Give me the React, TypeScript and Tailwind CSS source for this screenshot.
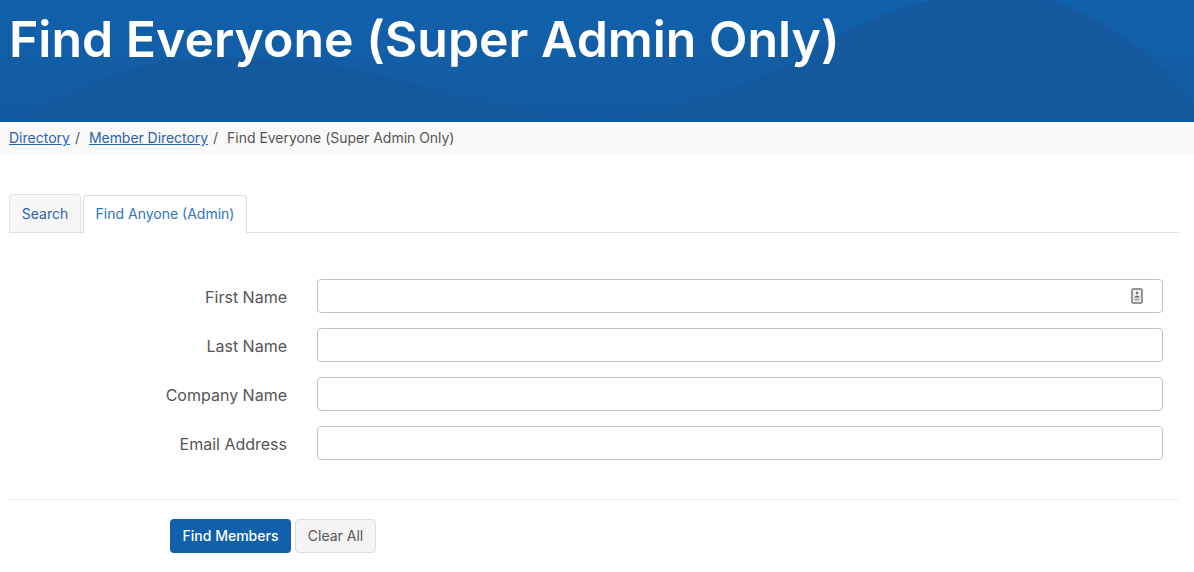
import React from "react";

function Row({ label, icon }: { label: string; icon?: boolean }) {
  return (
    <div className="flex items-center h-[34px] mb-[15px]">
      <label className="w-[287px] pt-[1px] text-right text-[16px] leading-[24px] text-[#555]">{label}</label>
      <div className="relative ml-[30px] w-[846px] h-[34px] rounded-[4px] border border-[#c4c4c4] bg-white">
        {icon && (
          <svg className="absolute left-[813px] top-[8px]" width="12" height="16" viewBox="0 0 12 16">
            <rect x="1" y="1" width="10" height="14" rx="1" fill="#eee" stroke="#777" strokeWidth="1.5" />
            <circle cx="6" cy="5" r="1.2" fill="#666" />
            <path d="M3.5 9.5 C3.5 7 8.5 7 8.5 9.5 Z" fill="#666" />
            <rect x="3.5" y="10.5" width="5" height="2" fill="#aaa" />
          </svg>
        )}
      </div>
    </div>
  );
}

export default function App() {
  return (
    <div className="w-[1194px] h-[572px] overflow-hidden bg-white font-['Inter',sans-serif]">
      <header className="relative h-[122px] overflow-hidden bg-gradient-to-b from-[#1161ac] to-[#135a9f] pl-[9px]">
        <svg className="absolute inset-0" width="1194" height="122" viewBox="0 0 1194 122" preserveAspectRatio="none">
          <path d="M15 122 C55 100 95 78 140 66 C210 52 320 56 400 80 C470 100 550 118 640 122 Z" fill="#14599d" />
          <path d="M590 122 C670 112 750 90 820 45 C860 22 900 8 930 0 L1050 0 C1120 25 1170 70 1194 105 L1194 122 Z" fill="#14599d" />
        </svg>
        <h1 className="relative pt-[9px] text-[50px] leading-[60px] font-semibold tracking-[-0.02px] text-white">Find Everyone (Super Admin Only)</h1>
      </header>
      <nav className="flex h-[32px] items-center bg-[#f9f9f9] pb-[1px] pl-[9px] text-[14px] text-[#555]">
        <a className="text-[#2b63ad] underline">Directory</a>
        <span className="ml-[5px]">/</span>
        <a className="ml-[9px] tracking-[-0.05px] text-[#2b63ad] underline">Member Directory</a>
        <span className="ml-[5px]">/</span>
        <span className="ml-[9px] tracking-[-0.03px]">Find Everyone (Super Admin Only)</span>
      </nav>
      <div className="mx-[9px] mt-[41px] flex h-[38px] w-[1170px] items-end gap-[2px] border-b border-[#ddd] text-[14px]">
        <div className="flex h-[38px] w-[72px] items-center justify-center rounded-t-[4px] border border-b-0 border-[#e4e4e4] bg-[#f7f7f7] text-[#2b63ad]">Search</div>
        <div className="mb-[-1px] flex h-[38px] w-[164px] items-center justify-center rounded-t-[4px] border border-b-0 border-[#ddd] bg-white pb-[2px] text-[#2f74bd]">Find Anyone (Admin)</div>
      </div>
      <form className="mt-[46px]">
        <Row label="First Name" icon />
        <Row label="Last Name" />
        <Row label="Company Name" />
        <Row label="Email Address" />
      </form>
      <div className="mx-[9px] mt-[39px] w-[1170px] border-t border-[#eee]" />
      <div className="ml-[170px] mt-[19px] flex gap-[4px] text-[14px]">
        <button className="h-[34px] w-[121px] rounded-[4px] bg-[#1160ab] pb-[1px] font-medium text-white">Find Members</button>
        <button className="h-[34px] w-[81px] rounded-[4px] border border-[#ddd] bg-[#f4f4f4] pb-[1px] text-[#555]">Clear All</button>
      </div>
    </div>
  );
}
